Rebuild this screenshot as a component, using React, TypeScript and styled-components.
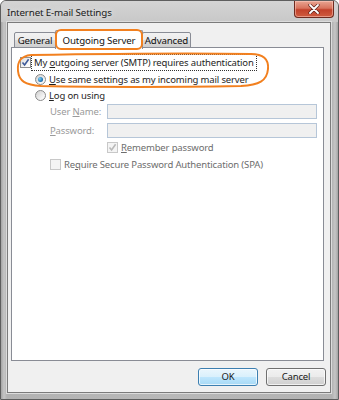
import React from "react";
import styled, { createGlobalStyle } from "styled-components";

const GlobalStyle = createGlobalStyle`
  html, body {
    margin: 0;
    padding: 0;
    background: #ffffff;
  }
  body {
    font-family: "Noto Sans", "Open Sans", "DejaVu Sans", sans-serif;
    font-size: 9.5px;
    letter-spacing: -0.15px;
    color: #1e1e1e;
  }
`;

const Window = styled.div`
  position: relative;
  width: 339px;
  height: 400px;
  box-sizing: border-box;
  display: flex;
  flex-direction: column;
  border: 1px solid #5e5e5e;
  border-radius: 6px 6px 0 0;
  background: linear-gradient(90deg, #a4a4a4 0px, #c6c6c6 3px, #b2b2b2 6px, #b8b8b8 50%, #b2b2b2 calc(100% - 6px), #c6c6c6 calc(100% - 3px), #a4a4a4 100%);
  overflow: hidden;
`;

const TitleBar = styled.div`
  height: 21px;
  display: flex;
  align-items: flex-start;
  justify-content: space-between;
  background: linear-gradient(180deg, #d4d4d4 0%, #c8c8c8 100%);
`;

const Title = styled.span`
  padding: 5px 0 0 6px;
  font-size: 9.8px;
  color: #1a1a1a;
  text-shadow: 0 0 6px #f4f4f4;
`;

const CloseButton = styled.div`
  width: 40px;
  height: 17px;
  margin-right: 4px;
  box-sizing: border-box;
  border: 1px solid #6e2a1f;
  border-top: none;
  border-radius: 0 0 4px 4px;
  background: linear-gradient(180deg, #e9a592 0%, #d8735d 45%, #c2412a 55%, #cf5c3f 100%);
  box-shadow: inset 0 0 0 1px rgba(255, 210, 200, 0.5);
  display: flex;
  align-items: center;
  justify-content: center;
`;

const Client = styled.div`
  flex: 1;
  margin: 0 7px 6px 6px;
  display: flex;
  flex-direction: column;
  background: #f0f0f0;
  border: 1px solid #7b7b7b;
  box-shadow: 0 0 0 1px #dcdcdc;
`;

const TabStrip = styled.div`
  position: relative;
  display: flex;
  align-items: flex-end;
  height: 25px;
  padding-left: 6px;
  z-index: 1;
`;

const Tab = styled.div<{ $active?: boolean; $w: number }>`
  box-sizing: border-box;
  width: ${(p) => p.$w}px;
  height: ${(p) => (p.$active ? "19px" : "16px")};
  margin: ${(p) => (p.$active ? "0 -1px -1px -1px" : "0")};
  display: flex;
  align-items: center;
  justify-content: center;
  border: 1px solid #898c95;
  border-bottom: ${(p) => (p.$active ? "none" : "1px solid #898c95")};
  border-radius: 2px 2px 0 0;
  background: ${(p) =>
    p.$active ? "#ffffff" : "linear-gradient(180deg, #f2f2f2 0%, #ebebeb 50%, #dddddd 51%, #cfcfcf 100%)"};
  font-size: 9.7px;
  color: #111;
  position: relative;
  z-index: ${(p) => (p.$active ? 2 : 1)};
`;

const Panel = styled.div`
  flex: 1;
  margin: -1px 6px 0 3px;
  background: #ffffff;
  border: 1px solid #898c95;
  padding: 6px 6px 0 8px;
  display: flex;
  flex-direction: column;
`;

const Row = styled.div<{ $indent?: number; $h?: number }>`
  display: flex;
  align-items: center;
  height: ${(p) => p.$h ?? 16}px;
  padding-left: ${(p) => p.$indent ?? 0}px;
  gap: 2px;
`;

const Label = styled.span<{ $disabled?: boolean; $focus?: boolean }>`
  white-space: nowrap;
  color: ${(p) => (p.$disabled ? "#6d6d6d" : "#1e1e1e")};
  outline: ${(p) => (p.$focus ? "1px dotted #333" : "none")};
  outline-offset: 1px;
  padding: 0 1px;
`;

const Check = styled.span<{ $disabled?: boolean }>`
  width: 11px;
  height: 11px;
  box-sizing: border-box;
  flex: none;
  display: flex;
  align-items: center;
  justify-content: center;
  border: 1px solid ${(p) => (p.$disabled ? "#c8c8c8" : "#8e8f8f")};
  background: ${(p) =>
    p.$disabled ? "#f4f4f4" : "linear-gradient(135deg, #dcdcdc 0%, #f8f8f8 70%, #ffffff 100%)"};
`;

const Radio = styled.span<{ $on?: boolean }>`
  width: 11px;
  height: 11px;
  box-sizing: border-box;
  flex: none;
  border-radius: 50%;
  border: 1px solid #8a8a8a;
  background: linear-gradient(135deg, #cfcfcf 0%, #f4f4f4 70%, #ffffff 100%);
  display: flex;
  align-items: center;
  justify-content: center;
  &::after {
    content: "";
    display: ${(p) => (p.$on ? "block" : "none")};
    width: 5px;
    height: 5px;
    border-radius: 50%;
    background: radial-gradient(circle at 35% 35%, #7fd0f4 0%, #2379b8 60%, #14457a 100%);
  }
`;

const Fields = styled.div`
  display: grid;
  grid-template-columns: 57px 1fr;
  row-gap: 4px;
  align-items: center;
  padding-left: 30px;
  margin-top: 1px;
`;

const FieldLabel = styled.span`
  color: #9a9a9a;
  white-space: nowrap;
`;

const Input = styled.div`
  height: 15px;
  box-sizing: border-box;
  border: 1px solid #b6c6d8;
  background: #f0f0f0;
`;

const Footer = styled.div`
  height: 31px;
  display: flex;
  align-items: center;
  justify-content: flex-end;
  gap: 8px;
  padding-right: 4px;
`;

const Button = styled.div<{ $default?: boolean }>`
  width: 60px;
  height: 18px;
  box-sizing: border-box;
  display: flex;
  align-items: center;
  justify-content: center;
  color: #1a1a1a;
  border: 1px solid ${(p) => (p.$default ? "#3c7fb1" : "#707070")};
  border-radius: 3px;
  background: ${(p) =>
    p.$default
      ? "linear-gradient(180deg, #eaf6fd 0%, #d9f0fc 50%, #bee6fd 51%, #a7d9f5 100%)"
      : "linear-gradient(180deg, #f2f2f2 0%, #ebebeb 50%, #dddddd 51%, #cfcfcf 100%)"};
  box-shadow: inset 0 0 0 1px rgba(255, 255, 255, 0.7);
`;

const TabRing = styled.div`
  position: absolute;
  left: 54px;
  top: 28px;
  width: 88px;
  height: 21px;
  box-sizing: border-box;
  border: 2px solid #f2801f;
  border-radius: 6px;
  pointer-events: none;
  z-index: 5;
`;

const Scribble = styled.svg`
  position: absolute;
  left: 0;
  top: 0;
  pointer-events: none;
  z-index: 5;
`;

const CheckMark = ({ color }: { color: string }) => (
  <svg width="9" height="9" viewBox="0 0 9 9">
    <path d="M1.5 4.5 L3.6 7 L7.6 1.3" fill="none" stroke={color} strokeWidth="1.6" />
  </svg>
);

export default function App() {
  return (
    <>
      <GlobalStyle />
      <Window>
        <TitleBar>
          <Title>Internet E-mail Settings</Title>
          <CloseButton>
            <svg width="12" height="10" viewBox="0 0 12 10">
              <path d="M2 1 L10 9 M10 1 L2 9" stroke="#5a2018" strokeWidth="3.2" strokeLinecap="round" />
              <path d="M2 1 L10 9 M10 1 L2 9" stroke="#ffffff" strokeWidth="1.8" strokeLinecap="round" />
            </svg>
          </CloseButton>
        </TitleBar>
        <Client>
          <TabStrip>
            <Tab $w={42}>General</Tab>
            <Tab $w={88} $active>
              Outgoing Server
            </Tab>
            <Tab $w={49}>Advanced</Tab>
          </TabStrip>
          <Panel>
            <Row $h={17}>
              <Check>
                <CheckMark color="#3d5a99" />
              </Check>
              <Label $focus>
                My <u>o</u>utgoing server (SMTP) requires authentication
              </Label>
            </Row>
            <Row $indent={15} $h={17}>
              <Radio $on />
              <Label>
                <u>U</u>se same settings as my incoming mail server
              </Label>
            </Row>
            <Row $indent={15} $h={15}>
              <Radio />
              <Label>
                <u>L</u>og on using
              </Label>
            </Row>
            <Fields>
              <FieldLabel>
                User <u>N</u>ame:
              </FieldLabel>
              <Input />
              <FieldLabel>
                <u>P</u>assword:
              </FieldLabel>
              <Input />
            </Fields>
            <Row $indent={87} $h={19}>
              <Check $disabled>
                <CheckMark color="#b9b9b9" />
              </Check>
              <Label $disabled>
                <u>R</u>emember password
              </Label>
            </Row>
            <Row $indent={30} $h={14}>
              <Check $disabled />
              <Label $disabled>
                Re<u>q</u>uire Secure Password Authentication (SPA)
              </Label>
            </Row>
          </Panel>
          <Footer>
            <Button $default>OK</Button>
            <Button>Cancel</Button>
          </Footer>
        </Client>
        <TabRing />
        <Scribble width="339" height="400" viewBox="0 0 339 400">
          <path
            d="M30 54 C90 53 200 52 250 53 C262 53 268 58 267 68 C266 80 258 84 240 85 C180 86 90 86 40 85 C24 84 18 80 17 70 C16 60 20 55 30 54"
            fill="none"
            stroke="#f2801f"
            strokeWidth="2"
          />
        </Scribble>
      </Window>
    </>
  );
}
